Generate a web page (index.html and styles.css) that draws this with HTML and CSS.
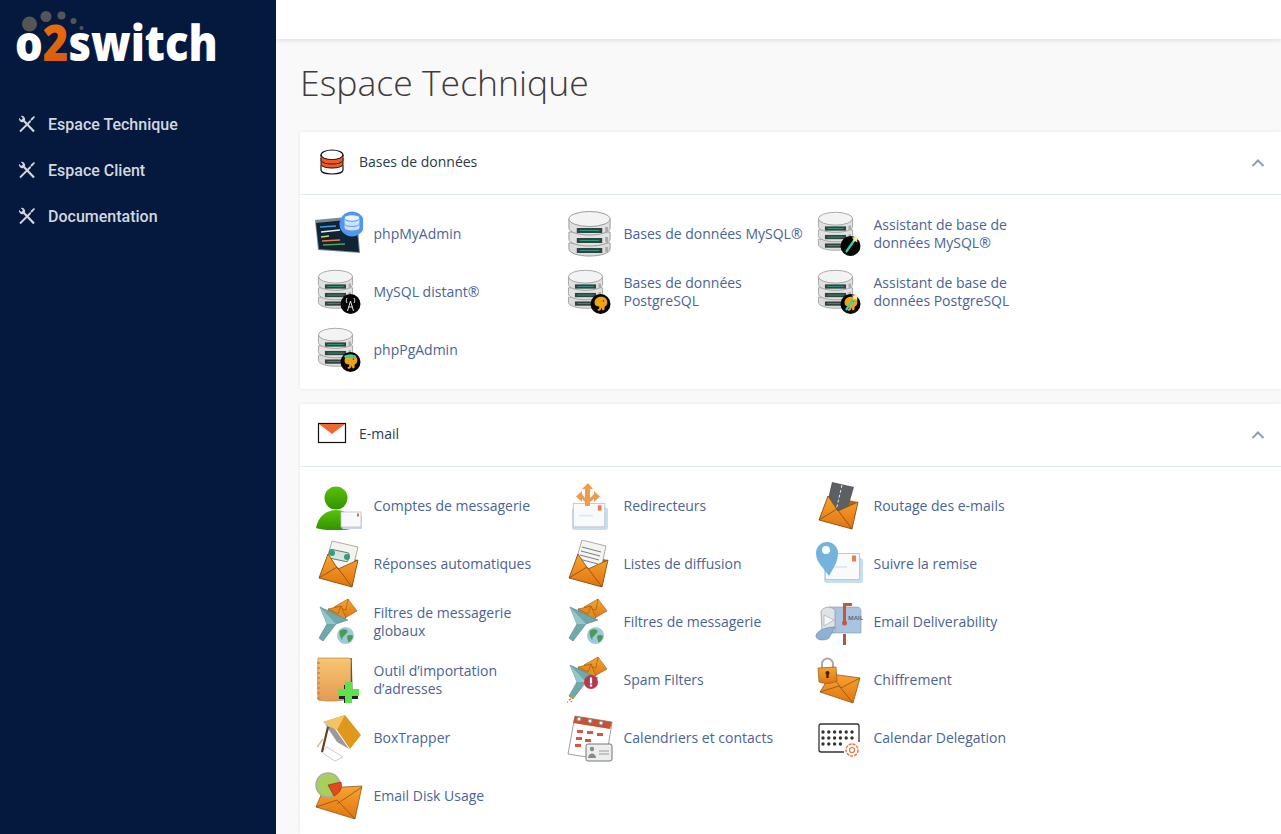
FILE: index.html
```html
<!DOCTYPE html>
<html>
  <head>
    <meta charset="utf-8">
    <title>Espace Technique</title>
    <link rel="stylesheet" href="styles.css">
  </head>
  <body>
    <!-- shared icon parts -->
    <svg class="defs" width="0" height="0">
      <defs>
        <linearGradient id="gOrange" x1="0" y1="0" x2="0" y2="1"><stop offset="0" stop-color="#f6a531"/><stop offset="1" stop-color="#e2740f"/></linearGradient>
        <linearGradient id="g2" x1="0" y1="0" x2="1" y2="1"><stop offset="0" stop-color="#f5780f"/><stop offset="1" stop-color="#b8440c"/></linearGradient>
        <linearGradient id="gBook" x1="0" y1="0" x2="0" y2="1"><stop offset="0" stop-color="#f7c671"/><stop offset="1" stop-color="#e59a54"/></linearGradient>
        <linearGradient id="gUser" x1="0" y1="0" x2="0" y2="1"><stop offset="0" stop-color="#5cc10a"/><stop offset="1" stop-color="#2f9300"/></linearGradient>
        <symbol id="tools" viewBox="0 0 18 18">
          <path d="M2 16.500 12.500 6" fill="none" stroke="currentColor" stroke-width="1.800"/>
          <path d="M12 6.500 13 3.500 16 1l1 1-2.500 3-3 1.500z" fill="currentColor"/>
          <path d="M6 6l10 10.500" fill="none" stroke="currentColor" stroke-width="2.200"/>
          <path d="M7 5.500A3.500 3.500 0 0 0 2.800 1L5 3.200 3.200 5 1 2.800A3.500 3.500 0 0 0 5.500 7z" fill="currentColor"/>
        </symbol>
        <symbol id="db" viewBox="0 0 48 48" preserveAspectRatio="none">
          <g stroke="#9a9a9a" stroke-width="1">
            <path d="M3 33v6c0 4 9 7 21 7s21-3 21-7v-6z" fill="#dcdcdc"/>
            <path d="M3 22v7c0 4 9 7 21 7s21-3 21-7v-7z" fill="#e2e2e2"/>
            <path d="M3 9v9c0 4 9 7 21 7s21-3 21-7V9z" fill="#e0e0e0"/>
            <ellipse cx="24" cy="9" rx="21" ry="7.500" fill="#f3f3f3"/>
          </g>
          <g fill="#33433f">
            <rect x="11" y="18" width="26" height="5"/>
            <rect x="11" y="28" width="26" height="5"/>
            <rect x="11" y="38" width="26" height="5"/>
          </g>
          <g fill="#2a9c82">
            <rect x="14" y="20" width="20" height="1"/>
            <rect x="14" y="30" width="20" height="1"/>
            <rect x="14" y="40" width="20" height="1"/>
          </g>
          <g fill="#aaa">
            <rect x="40" y="17" width="3" height="5"/>
            <rect x="40" y="27" width="3" height="5"/>
            <rect x="40" y="37" width="3" height="5"/>
          </g>
        </symbol>
        <symbol id="elephant" viewBox="0 0 20 20">
          <path d="M3 9C3 4 7 2 11 2s7 2.500 7 6.500c0 3-1.500 4.500-3 5l-.5 4.500h-2.500l-.3-3.500c-.7 2.500-2 4.500-4.200 4-1.200-.3-1.400-1.800-.4-2 1.200.2 1.600-1 1.500-3C5 13.500 3 12 3 9z" fill="#eea313"/>
          <circle cx="13.500" cy="7" r=".8" fill="#222"/>
        </symbol>
        <symbol id="wand" viewBox="0 0 20 20">
          <path d="M5 18 13.500 6" stroke="#2ed6b4" stroke-width="2.200" fill="none"/>
          <path d="M14.500 1l1 2.500 2.500.5-2 2 .5 2.500-2.500-1.500L12 8l.5-2.500-1.500-2 2.500-.2z" fill="#f6efa3"/>
        </symbol>
        <symbol id="env" viewBox="0 0 48 48">
          <path d="M13 14 43 20 37 47 4 38z" fill="#b9650f"/>
        </symbol>
        <symbol id="envFront" viewBox="0 0 48 48">
          <path d="M4 38 13 14 23 29 43 20 37 47z" fill="url(#gOrange)" stroke="#7d4c1b" stroke-width=".8"/>
          <path d="M4 38 22 27 37 47" fill="none" stroke="#7d4c1b" stroke-width=".8"/>
        </symbol>
        <symbol id="mailWhite" viewBox="0 0 40 30" preserveAspectRatio="none">
          <rect x="1" y="5" width="39" height="25" rx="3" fill="#c7deee"/>
          <rect x="2.500" y=".5" width="34" height="26" fill="#f8fafc" stroke="#bcc8d2"/>
          <rect x="29" y="2.500" width="4" height="6" fill="#ee7b52"/>
          <rect x="9" y="13" width="15" height="2" fill="#e2e8ee"/>
        </symbol>
        <symbol id="filter" viewBox="0 0 48 48">
          <path d="M19 9 33 1l9 12-14 8z" fill="url(#gOrange)" stroke="#8a5a20" stroke-width=".6"/>
          <path d="M19 9 31 12 33 1" fill="none" stroke="#8a5a20" stroke-width=".6"/>
          <path d="M13 11l13-3 5 12-13 4z" fill="#ea8a1f" stroke="#8a5a20" stroke-width=".6"/>
          <path d="M13 11 23 16 26 8" fill="none" stroke="#8a5a20" stroke-width=".6"/>
          <path d="M5 9 33 22 21 26 8 43 4 40 12 26z" fill="#6fa9ac" stroke="#4f8487" stroke-width=".6"/>
          <path d="M5 9 12 26 21 26z" fill="#94c7c8"/>
        </symbol>
        <symbol id="globe" viewBox="0 0 20 20">
          <circle cx="10" cy="10" r="9" fill="#9cc9e2"/>
          <path d="M4 5c3-2 6-2 8 0 1 2-2 3-3 5-2 1-3 3-2 5-2-1-4-7-3-10zM12 10c2-1 5-1 6 1-1 3-3 6-5 6 0-2-2-4-1-7z" fill="#4f9a4c"/>
        </symbol>
        <symbol id="lock" viewBox="0 0 48 48">
          <path d="M7 12V8a5.500 5.500 0 0 1 11 0v5" fill="none" stroke="#a8a8a8" stroke-width="2"/>
          <path d="M3 12l18-1 1 14c-6 3-13 3-18 1z" fill="url(#gOrange)" stroke="#8b5b1a" stroke-width=".7"/>
          <path d="M12.500 15a2 2 0 0 1 1.200 3.600v3.400h-2.400v-3.400A2 2 0 0 1 12.500 15z" fill="#3a2610"/>
        </symbol>
      </defs>
    </svg>

    <div class="layout">
      <aside class="sidebar">
        <svg class="logo" width="276" height="80" viewBox="0 0 276 80">
          <g fill="#555">
            <circle cx="29.500" cy="24" r="7.500"/>
            <circle cx="46" cy="16.500" r="5.500"/>
            <circle cx="61.500" cy="15.500" r="4"/>
            <circle cx="73.500" cy="21" r="3"/>
            <circle cx="81.500" cy="28" r="2"/>
          </g>
          <text class="logo-text" transform="translate(15 61) scale(.873 1)">o<tspan fill="url(#g2)">2</tspan>switch</text>
        </svg>
        <nav class="side-nav">
          <a class="side-link"><svg class="side-icon"><use href="#tools"/></svg>Espace Technique</a>
          <a class="side-link"><svg class="side-icon"><use href="#tools"/></svg>Espace Client</a>
          <a class="side-link"><svg class="side-icon"><use href="#tools"/></svg>Documentation</a>
        </nav>
      </aside>

      <div class="main">
        <div class="topbar"></div>
        <h1 class="page-title">Espace Technique</h1>

        <section class="panel">
          <header class="panel-head">
            <svg class="head-icon" viewBox="0 0 32 32">
              <path d="M5 20v5c0 2.500 5 4 11 4s11-1.500 11-4v-5" fill="#fff" stroke="#111" stroke-width="1.200"/>
              <path d="M5 13v6c0 2.500 5 4 11 4s11-1.500 11-4v-6z" fill="#f2592a" stroke="#111" stroke-width="1"/>
              <ellipse cx="16" cy="10" rx="11" ry="5" fill="#fff" stroke="#111" stroke-width="1.200"/>
              <path d="M5 10v5c0 2.500 5 4 11 4s11-1.500 11-4v-5c0 2.500-5 4.500-11 4.500S5 12.500 5 10z" fill="#f2592a" stroke="#111" stroke-width=".8"/>
            </svg>
            <span class="panel-name">Bases de données</span>
            <svg class="chevron" viewBox="0 0 14 8"><path d="M1.500 7 7 1.500 12.500 7" fill="none" stroke="#8aa0ac" stroke-width="2"/></svg>
          </header>
          <div class="item-grid">
            <a class="item">
              <svg class="ico" viewBox="0 0 48 48">
                <path d="M0 10 42 6 45 43 3 40z" fill="#7c8a94"/>
                <path d="M1 13 41 9 44 42 4 39z" fill="#0f2436"/>
                <g stroke-width="1.500"><path d="M5 17 21 16" stroke="#3f9fd6"/><path d="M6 22 25 20" stroke="#e9eef2"/><path d="M6 27 14 26" stroke="#d2d86a"/><path d="M7 31 25 30" stroke="#f07a4c"/><path d="M8 35 30 34" stroke="#51a648"/></g>
                <circle cx="37" cy="14" r="12.500" fill="#4f97f2"/>
                <path d="M29 9v10c0 2 3.500 3.500 8 3.500s8-1.500 8-3.500V9z" fill="#cfe2fb" stroke="#4f97f2" stroke-width="1" transform="translate(0 -1)"/>
                <ellipse cx="37" cy="8" rx="8" ry="3.300" fill="#e8f1fd" stroke="#4f97f2"/>
                <path d="M29 13c0 2 3.500 3.500 8 3.500s8-1.500 8-3.500M29 17.500c0 2 3.500 3.500 8 3.500s8-1.500 8-3.500" fill="none" stroke="#4f97f2"/>
              </svg>
              <span class="item-label">phpMyAdmin</span>
            </a>
            <a class="item">
              <svg class="ico" viewBox="0 0 48 48"><use href="#db" x="1" y="0" width="47" height="48"/></svg>
              <span class="item-label">Bases de données MySQL®</span>
            </a>
            <a class="item">
              <svg class="ico" viewBox="0 0 48 48">
                <use href="#db" x="1" y="1" width="39" height="41"/>
                <circle cx="35.500" cy="36" r="10" fill="#050505"/>
                <use href="#wand" x="26" y="24" width="20" height="20"/>
              </svg>
              <span class="item-label">Assistant de base de données MySQL®</span>
            </a>
            <a class="item">
              <svg class="ico" viewBox="0 0 48 48">
                <use href="#db" x="1" y="1" width="39" height="41"/>
                <circle cx="35.500" cy="36" r="10" fill="#050505"/>
                <path d="M35.500 33 32.500 43M35.500 33 38.500 43M33.500 39h4M32 30c-1 2-1 3.500 0 5M39 30c1 2 1 3.500 0 5" stroke="#e8e8e8" stroke-width="1" fill="none"/>
              </svg>
              <span class="item-label">MySQL distant®</span>
            </a>
            <a class="item">
              <svg class="ico" viewBox="0 0 48 48">
                <use href="#db" x="1" y="1" width="39" height="41"/>
                <circle cx="35.500" cy="36" r="10" fill="#050505"/>
                <use href="#elephant" x="27" y="27" width="17" height="17"/>
              </svg>
              <span class="item-label">Bases de données PostgreSQL</span>
            </a>
            <a class="item">
              <svg class="ico" viewBox="0 0 48 48">
                <use href="#db" x="1" y="1" width="39" height="41"/>
                <circle cx="35.500" cy="36" r="10" fill="#050505"/>
                <use href="#elephant" x="27" y="27" width="17" height="17"/>
                <use href="#wand" x="26" y="24" width="20" height="20"/>
              </svg>
              <span class="item-label">Assistant de base de données PostgreSQL</span>
            </a>
            <a class="item">
              <svg class="ico" viewBox="0 0 48 48">
                <use href="#db" x="1" y="1" width="39" height="41"/>
                <circle cx="35.500" cy="36" r="10" fill="#050505"/>
                <use href="#elephant" x="27" y="27" width="17" height="17"/>
                <path d="M29 30c3-2 9-2 12 0l-1 2H30z" fill="#2fd0b0"/>
              </svg>
              <span class="item-label">phpPgAdmin</span>
            </a>
          </div>
        </section>

        <section class="panel">
          <header class="panel-head">
            <svg class="head-icon" viewBox="0 0 32 32">
              <rect x="2.500" y="6.500" width="27" height="19" fill="#fff" stroke="#111" stroke-width="1.200"/>
              <path d="M3 7h26L16 17z" fill="#f2652c"/>
            </svg>
            <span class="panel-name">E-mail</span>
            <svg class="chevron" viewBox="0 0 14 8"><path d="M1.500 7 7 1.500 12.500 7" fill="none" stroke="#8aa0ac" stroke-width="2"/></svg>
          </header>
          <div class="item-grid">
            <a class="item">
              <svg class="ico" viewBox="0 0 48 48">
                <circle cx="21" cy="16" r="11.500" fill="url(#gUser)"/>
                <path d="M1 46c2-12 11-18 20-18 7 0 12 3 15 9l4 9c-10 3-30 3-39 0z" fill="url(#gUser)"/>
                <rect x="27" y="33" width="20" height="14" rx="1" fill="#c8d8e2"/>
                <rect x="26" y="30" width="20" height="15" fill="#f7f9fb" stroke="#b8c4cc" stroke-width=".8"/>
                <rect x="42" y="31.500" width="2" height="3" fill="#e4683f"/>
              </svg>
              <span class="item-label">Comptes de messagerie</span>
            </a>
            <a class="item">
              <svg class="ico" viewBox="0 0 48 48">
                <use href="#mailWhite" x="6" y="21" width="37" height="27"/>
                <path d="M23 1l5 6h-3v9l4-4v-3l6 5.500-6 5.500v-3l-4 3v4h-5v-4l-3-3v3l-6-5.500L17 9v3l3 4V7h-3z" fill="#ee9a4f"/>
              </svg>
              <span class="item-label">Redirecteurs</span>
            </a>
            <a class="item">
              <svg class="ico" viewBox="0 0 48 48">
                <use href="#env"/>
                <path d="M17 0 39 5 30 36 10 30z" fill="#5c5f63"/>
                <path d="M27 3 20 33" stroke="#e8e8e8" stroke-dasharray="3 2"/>
                <use href="#envFront"/>
              </svg>
              <span class="item-label">Routage des e-mails</span>
            </a>
            <a class="item">
              <svg class="ico" viewBox="0 0 48 48">
                <use href="#env"/>
                <path d="M17 1 43 7 37 32 10 26z" fill="#f4f3ee" stroke="#777" stroke-width=".6"/>
                <rect x="14" y="11" width="20" height="9" rx="2" transform="rotate(12 24 15)" fill="#d4e6de" stroke="#333" stroke-width=".6"/>
                <circle cx="17" cy="13" r="3" fill="#2f9d7e"/><circle cx="32" cy="17" r="3" fill="#2f9d7e"/>
                <use href="#envFront"/>
              </svg>
              <span class="item-label">Réponses automatiques</span>
            </a>
            <a class="item">
              <svg class="ico" viewBox="0 0 48 48">
                <use href="#env"/>
                <path d="M17 0 41 6 35 34 9 27z" fill="#f4f4f0" stroke="#777" stroke-width=".6"/>
                <path d="M17 7 36 12M16 11 35 16M15 15 34 20M14 19 33 24" stroke="#77818a"/>
                <use href="#envFront"/>
              </svg>
              <span class="item-label">Listes de diffusion</span>
            </a>
            <a class="item">
              <svg class="ico" viewBox="0 0 48 48">
                <use href="#mailWhite" x="8" y="13" width="40" height="30"/>
                <path d="M14 36C9 28 1 23 1 13a11 11 0 0 1 22 0c0 10-5 15-9 23z" fill="#74b4da"/>
                <circle cx="11" cy="10" r="4" fill="#fff"/>
              </svg>
              <span class="item-label">Suivre la remise</span>
            </a>
            <a class="item">
              <svg class="ico" viewBox="0 0 48 48">
                <use href="#filter"/>
                <use href="#globe" x="21" y="28" width="19" height="19"/>
              </svg>
              <span class="item-label">Filtres de messagerie globaux</span>
            </a>
            <a class="item">
              <svg class="ico" viewBox="0 0 48 48">
                <use href="#filter"/>
                <use href="#globe" x="21" y="28" width="19" height="19"/>
              </svg>
              <span class="item-label">Filtres de messagerie</span>
            </a>
            <a class="item">
              <svg class="ico" viewBox="0 0 48 48">
                <rect x="28" y="36" width="3" height="11" fill="#b5583a"/>
                <path d="M14 9h28c3 0 4 2 4 5v21H14z" fill="#a8c4e0" stroke="#7d98b4" stroke-width=".6"/>
                <path d="M6 13c4-5 10-5 14-1v22H7z" fill="#dfe3e6" stroke="#7d8a92" stroke-width=".6"/>
                <path d="M9 17l10 5-10 6z" fill="#f5f6f7" stroke="#8b959c" stroke-width=".5"/>
                <path d="M1 37c3-6 12-8 19-8l-6 11c-3 3-14 3-13-3z" fill="#8fb2d4" stroke="#66839f" stroke-width=".6"/>
                <path d="M28 5h9v3h-6v18h-3z" fill="#c25a3a"/>
                <circle cx="29.500" cy="25" r="2.500" fill="#c25a3a"/>
                <text class="mail-text" x="33" y="22">MAIL</text>
              </svg>
              <span class="item-label">Email Deliverability</span>
            </a>
            <a class="item">
              <svg class="ico" viewBox="0 0 48 48">
                <path d="M36 2 37 43" stroke="#6b4a2a" stroke-width="1.500"/>
                <path d="M3 2h30c2 0 3 1 3 3l-1 38c-10 2-22 3-32 1-.5-13-.5-28 0-42z" fill="url(#gBook)" stroke="#a9783c" stroke-width=".6"/>
                <path d="M2 7h3M2 12h3M2 17h3M2 22h3M2 27h3M2 32h3M2 37h3M2 42h3" stroke="#c98a3c" stroke-width="1.500"/>
                <path d="M29 29h8v6h6v8h-6v4h-8v-4h-5v-8h5z" fill="#222"/>
                <path d="M30 26h7v7h7v7h-7v7h-7v-7h-7v-7h7z" fill="#5fe04f"/>
              </svg>
              <span class="item-label">Outil d’importation d’adresses</span>
            </a>
            <a class="item">
              <svg class="ico" viewBox="0 0 48 48">
                <use href="#filter"/>
                <circle cx="26" cy="26" r="7" fill="#b33a48"/>
                <rect x="24.900" y="21.500" width="2.200" height="6" fill="#fff"/>
                <circle cx="26" cy="29.500" r="1.200" fill="#fff"/>
                <path d="M4 44l2-1M7 41l2-1M2 46h1M6 46l1-1" stroke="#ea8a1f" stroke-width="1.500"/>
              </svg>
              <span class="item-label">Spam Filters</span>
            </a>
            <a class="item">
              <svg class="ico" viewBox="0 0 48 48">
                <path d="M5 36 16 18 45 22 38 47z" fill="url(#gOrange)" stroke="#7d4c1b" stroke-width=".7"/>
                <path d="M16 18 26 32 45 22M5 36 24 30 38 47" fill="none" stroke="#7d4c1b" stroke-width=".7"/>
                <use href="#lock"/>
              </svg>
              <span class="item-label">Chiffrement</span>
            </a>
            <a class="item">
              <svg class="ico" viewBox="0 0 48 48">
                <path d="M12 33 28 43 20 47 6 38z" fill="#fff" stroke="#aaa" stroke-width=".6"/>
                <path d="M10 10 20 15 34 35 22 28z" fill="#9a9a9a"/>
                <path d="M8 8 30 1 46 21 35 35 22 16z" fill="#e0981c"/>
                <path d="M8 8 30 1 22 16z" fill="#f5c264"/>
                <path d="M13 13 7 38" stroke="#6b3f22" stroke-width="2.200"/>
                <path d="M8 25 2 33" stroke="#d9b98a" stroke-width="1.300"/>
              </svg>
              <span class="item-label">BoxTrapper</span>
            </a>
            <a class="item">
              <svg class="ico" viewBox="0 0 48 48">
                <path d="M10 2 47 8 41 46 3 40z" fill="#fff" stroke="#777" stroke-width=".7"/>
                <path d="M10 2 47 8 45 15 8 9z" fill="#c95233"/>
                <g fill="#fff" stroke="#888"><circle cx="14" cy="5" r="2"/><circle cx="25" cy="7" r="2"/><circle cx="36" cy="9" r="2"/></g>
                <g fill="#db553a"><rect x="12" y="16" width="6" height="3"/><rect x="22" y="17" width="6" height="3"/><rect x="32" y="19" width="6" height="3"/><rect x="11" y="23" width="6" height="3"/><rect x="20" y="25" width="6" height="3"/><rect x="10" y="30" width="6" height="3"/></g>
                <rect x="21" y="30" width="26" height="17" rx="2" fill="#eceded" stroke="#777"/>
                <circle cx="27" cy="35" r="2.200" fill="#8a8a8a"/>
                <path d="M23 44c0-6 8-6 8 0z" fill="#8a8a8a"/>
                <path d="M34 37h10M34 40h10" stroke="#999"/>
              </svg>
              <span class="item-label">Calendriers et contacts</span>
            </a>
            <a class="item">
              <svg class="ico" viewBox="0 0 48 48">
                <path d="M29 38H6a2 2 0 0 1-2-2V12a2 2 0 0 1 2-2h36a2 2 0 0 1 2 2v16" fill="#fff" stroke="#333" stroke-width="1.300"/>
                <path d="M8 18h30M8 24h30M8 30h18" stroke="#333" stroke-width="3.400" stroke-linecap="round" stroke-dasharray="0 5.800"/>
                <circle cx="37" cy="36" r="6" fill="none" stroke="#f2703a" stroke-width="1.400" stroke-dasharray="3 1"/>
                <circle cx="37" cy="36" r="2.500" fill="none" stroke="#f2703a" stroke-width="1.200"/>
              </svg>
              <span class="item-label">Calendar Delegation</span>
            </a>
            <a class="item">
              <svg class="ico" viewBox="0 0 48 48">
                <path d="M1 35 9 16 47 14 40 47z" fill="url(#gOrange)" stroke="#7d4c1b" stroke-width=".7"/>
                <path d="M1 35 22 28 40 47M22 32 47 15" fill="none" stroke="#7d4c1b" stroke-width=".7"/>
                <circle cx="13" cy="13" r="12" fill="#a7cf5c" stroke="#a9a9a9" stroke-width="1.500"/>
                <path d="M13 13l13-3c2 6-2 12-7 14z" fill="#e24a1d" stroke="#8a2a10" stroke-width=".6"/>
              </svg>
              <span class="item-label">Email Disk Usage</span>
            </a>
          </div>
        </section>
      </div>
    </div>
  </body>
</html>
```

FILE: styles.css
```css
html, body {
  height: 100%;
}
body {
  margin: 0;
  padding: 0;
  overflow: hidden;
  font-family: "Open Sans", "Liberation Sans", sans-serif;
  color: #293a4a;
  background-color: #f9f9fa;
}
.defs {
  position: absolute;
}
.layout {
  display: flex;
  height: 100%;
}

/* sidebar */
.sidebar {
  flex: 0 0 276px;
  background-color: #05193f;
}
.logo {
  display: block;
}
.logo-text {
  font-family: "Open Sans", sans-serif;
  font-weight: 800;
  font-size: 50px;
  fill: #fff;
}
.side-nav {
  padding-top: 21px;
}
.side-link {
  display: flex;
  align-items: center;
  height: 46px;
  padding-left: 18px;
  font-family: Roboto, sans-serif;
  font-size: 16px;
  font-weight: 500;
  color: #d3d7de;
}
.side-icon {
  width: 18px;
  height: 18px;
  margin-right: 12px;
}

/* content */
.main {
  flex: 1;
  min-width: 0;
  overflow: hidden;
}
.topbar {
  height: 39px;
  background-color: #fff;
  box-shadow: 0 1px 5px rgba(0, 0, 0, 0.12);
}
.page-title {
  margin: 0;
  padding: 19px 0 0 24px;
  height: 74px;
  font-size: 35.6px;
  font-weight: 300;
  line-height: 49px;
  color: #403a3c;
}
.panel {
  margin: 0 0 15px 24px;
  border-radius: 3px 0 0 3px;
  background-color: #fff;
  box-shadow: 0 0 4px rgba(0, 0, 0, 0.08);
}
.panel-head {
  display: flex;
  align-items: center;
  height: 58px;
  padding: 0 16px 4px;
  border-bottom: 1px solid #e2e8f0;
}
.head-icon {
  width: 32px;
  height: 32px;
  margin-right: 11px;
}
.panel-name {
  flex: 1;
  font-size: 14px;
  color: #293a4a;
}
.chevron {
  width: 14px;
  height: 8px;
  margin-top: 4px;
}
.item-grid {
  display: grid;
  grid-template-columns: repeat(3, 250px);
  grid-auto-rows: 58px;
  padding: 10px 0 10px 15px;
}
.item {
  display: flex;
  align-items: center;
}
.ico {
  flex: 0 0 48px;
  width: 48px;
  height: 48px;
  margin-right: 10.5px;
}
.item-label {
  width: 165px;
  font-size: 14px;
  line-height: 18px;
  color: #4a6494;
}
.item:nth-child(3n + 2) .item-label {
  width: 185px;
}
.mail-text {
  font-family: "Open Sans", sans-serif;
  font-size: 6px;
  font-weight: 700;
  fill: #5a6f85;
}
```
